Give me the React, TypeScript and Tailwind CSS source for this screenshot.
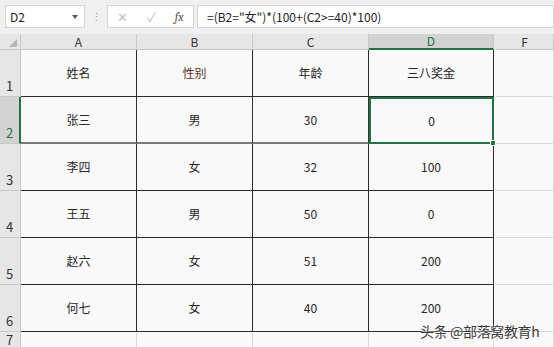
import React from "react";

const FONT = { fontFamily: '"Noto Sans CJK SC", "Noto Sans", sans-serif' };

const rows = [
  { n: "1", cells: ["姓名", "性别", "年龄", "三八奖金"] },
  { n: "2", cells: ["张三", "男", "30", "0"] },
  { n: "3", cells: ["李四", "女", "32", "100"] },
  { n: "4", cells: ["王五", "男", "50", "0"] },
  { n: "5", cells: ["赵六", "女", "51", "200"] },
  { n: "6", cells: ["何七", "女", "40", "200"] },
];

const cols = ["A", "B", "C", "D", "F"];

export default function App() {
  return (
    <div
      className="relative w-[554px] h-[347px] overflow-hidden bg-[#f9f9f9] text-[#262626] flex flex-col"
      style={FONT}
    >
      {/* FORMULA BAR */}
      <div className="h-[34px] bg-[#f0f0f0] flex items-start pt-[5px] pl-[5px] shrink-0">
        <div className="w-[80px] h-[23px] bg-white border border-[#d4d4d4] flex items-center justify-between pl-[4px] pr-[6px] text-[12px]">
          <span>D2</span>
          <span className="w-0 h-0 border-l-[3px] border-r-[3px] border-t-[4px] border-l-transparent border-r-transparent border-t-[#555]" />
        </div>
        <div className="w-[22px] h-[23px] flex items-center justify-center text-[#9a9a9a] text-[11px]">⋮</div>
        <div className="w-[87px] h-[23px] bg-white border border-[#d4d4d4] flex items-center justify-around text-[13px]">
          <span className="text-[#c0c0c0]">✕</span>
          <span className="text-[#c0c0c0]">✓</span>
          <span className="text-[#555] italic font-serif text-[12px]">fx</span>
        </div>
        <div className="ml-[3px] flex-1 h-[23px] bg-white border border-[#d4d4d4] flex items-center pl-[9px] text-[12px] text-[#222]">
          =(B2="女")*(100+(C2&gt;=40)*100)
        </div>
      </div>

      {/* COLUMN HEADERS */}
      <div className="h-[16px] flex shrink-0 bg-[#e6e6e6] text-[12px] text-[#333]">
        <div className="w-[21px] border-r border-b border-[#c8c8c8] flex items-end justify-end pr-[3px] pb-[2px]">
          <svg width="8" height="8" viewBox="0 0 8 8">
            <path d="M8 0 L8 8 L0 8 Z" fill="#b5b5b5" />
          </svg>
        </div>
        {cols.map((c) => (
          <div
            key={c}
            className={
              c === "D"
                ? "w-[125px] bg-[#d2d2d2] border-r border-[#c8c8c8] border-b-2 border-b-[#217346] flex items-center justify-center leading-none text-[#217346]"
                : c === "F"
                ? "w-[58px] ml-[2px] border-r border-b border-[#c8c8c8] flex items-center justify-center leading-none"
                : "w-[116px] border-r border-b border-[#c8c8c8] flex items-center justify-center leading-none"
            }
          >
            {c}
          </div>
        ))}
      </div>

      {/* GRID */}
      {rows.map((r, i) => (
        <div key={r.n} className="h-[47px] flex shrink-0 text-[12px]">
          <div
            className={
              i === 1
                ? "w-[21px] bg-[#d2d2d2] border-r-2 border-[#217346] border-b border-b-[#c8c8c8] flex items-end pl-[6px] pb-[1px] text-[#217346] text-[13px]"
                : "w-[21px] bg-[#e6e6e6] border-r border-b border-[#c8c8c8] flex items-end pl-[6px] pb-[1px] text-[#333] text-[13px]"
            }
          >
            {r.n}
          </div>
          {r.cells.map((v, j) => (
            <div
              key={j}
              className={
                (j === 3 ? "w-[125px] " : "w-[116px] ") +
                (i === 1 && j === 3
                  ? "relative border-2 border-[#217346] "
                  : "border-r border-b " + (i === 1 ? "border-b-[#7a7a7a] border-b-2 border-r-[#333] " : "border-[#2a2a2a] ")) +
                "flex items-center justify-center"
              }
            >
              <span className={j === 1 && i === 0 ? "text-[#5a2f2a]" : ""}>{v}</span>
              {i === 1 && j === 3 && (
                <span className="absolute -right-[4px] -bottom-[4px] w-[6px] h-[6px] bg-[#217346] border border-white" />
              )}
            </div>
          ))}
          <div className="w-[58px] ml-[2px] border-r border-b border-[#dadada]" />
        </div>
      ))}
      <div className="h-[15px] flex shrink-0 text-[13px]">
        <div className="w-[21px] bg-[#e6e6e6] border-r border-[#c8c8c8] pl-[6px] pt-[1px] leading-[13px] text-[#333]">7</div>
        <div className="w-[116px] border-r border-[#dadada]" />
        <div className="w-[116px] border-r border-[#dadada]" />
        <div className="w-[116px] border-r border-[#dadada]" />
        <div className="w-[125px] border-r border-[#dadada]" />
        <div className="w-[58px] ml-[2px] border-r border-[#dadada]" />
      </div>

      {/* WATERMARK */}
      <div
        className="absolute left-[420px] top-[321px] text-[14px] text-[#3a3a3a] tracking-tight"
        style={{ textShadow: "0 0 2px #fff, 0 0 2px #fff" }}
      >
        头条 @部落窝教育h
      </div>
    </div>
  );
}
